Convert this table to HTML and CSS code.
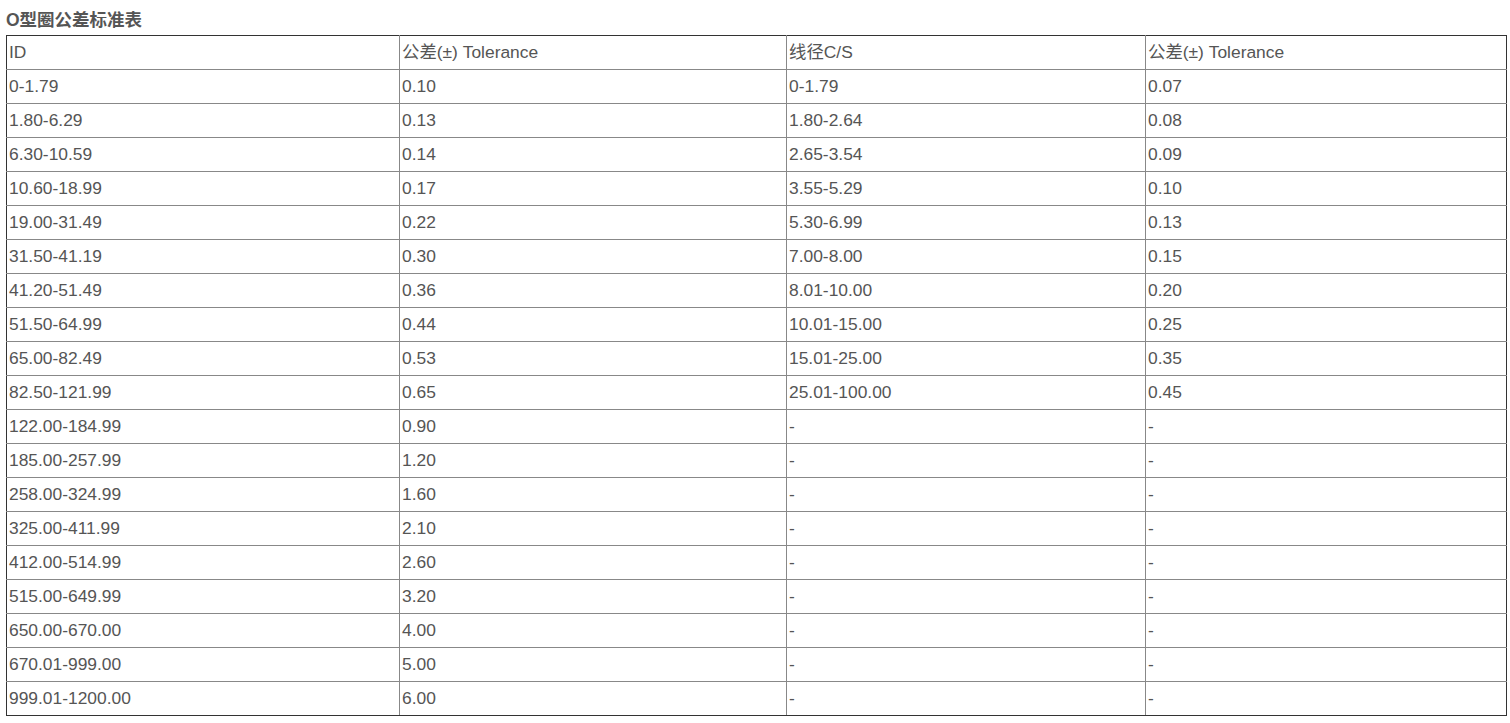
FILE: index.html
```html
<!DOCTYPE html>
<html lang="zh">
<head>
<meta charset="utf-8">
<title>O型圈公差标准表</title>
<link rel="stylesheet" href="styles.css">
</head>
<body>
<div class="page">
  <h3 class="title">O型圈公差标准表</h3>
  <table class="tol">
    <colgroup>
      <col class="c1"><col class="c2"><col class="c3"><col class="c4">
    </colgroup>
    <tbody>
      <tr><td>ID</td><td>公差(±) Tolerance</td><td>线径C/S</td><td>公差(±) Tolerance</td></tr>
      <tr><td>0-1.79</td><td>0.10</td><td>0-1.79</td><td>0.07</td></tr>
      <tr><td>1.80-6.29</td><td>0.13</td><td>1.80-2.64</td><td>0.08</td></tr>
      <tr><td>6.30-10.59</td><td>0.14</td><td>2.65-3.54</td><td>0.09</td></tr>
      <tr><td>10.60-18.99</td><td>0.17</td><td>3.55-5.29</td><td>0.10</td></tr>
      <tr><td>19.00-31.49</td><td>0.22</td><td>5.30-6.99</td><td>0.13</td></tr>
      <tr><td>31.50-41.19</td><td>0.30</td><td>7.00-8.00</td><td>0.15</td></tr>
      <tr><td>41.20-51.49</td><td>0.36</td><td>8.01-10.00</td><td>0.20</td></tr>
      <tr><td>51.50-64.99</td><td>0.44</td><td>10.01-15.00</td><td>0.25</td></tr>
      <tr><td>65.00-82.49</td><td>0.53</td><td>15.01-25.00</td><td>0.35</td></tr>
      <tr><td>82.50-121.99</td><td>0.65</td><td>25.01-100.00</td><td>0.45</td></tr>
      <tr><td>122.00-184.99</td><td>0.90</td><td>-</td><td>-</td></tr>
      <tr><td>185.00-257.99</td><td>1.20</td><td>-</td><td>-</td></tr>
      <tr><td>258.00-324.99</td><td>1.60</td><td>-</td><td>-</td></tr>
      <tr><td>325.00-411.99</td><td>2.10</td><td>-</td><td>-</td></tr>
      <tr><td>412.00-514.99</td><td>2.60</td><td>-</td><td>-</td></tr>
      <tr><td>515.00-649.99</td><td>3.20</td><td>-</td><td>-</td></tr>
      <tr><td>650.00-670.00</td><td>4.00</td><td>-</td><td>-</td></tr>
      <tr><td>670.01-999.00</td><td>5.00</td><td>-</td><td>-</td></tr>
      <tr><td>999.01-1200.00</td><td>6.00</td><td>-</td><td>-</td></tr>
    </tbody>
  </table>
</div>
</body>
</html>
```

FILE: styles.css
```css
html, body {
  margin: 0;
  padding: 0;
  background: #fff;
}

.page {
  padding: 10px 0 0 6px;
  font-family: "Liberation Sans", Arial, "Noto Sans CJK SC", sans-serif;
  color: #555;
}

.title {
  margin: 0 0 5px 0;
  font-size: 17.5px;
  line-height: 20px;
  font-weight: bold;
  color: #555;
  font-family: "Liberation Sans", Arial, "Noto Sans CJK SC", sans-serif;
}

.tol {
  width: 1500px;
  table-layout: fixed;
  border-collapse: collapse;
  border: 1px solid #333;
  font-size: 17.4px;
}

.c1 { width: 393px; }
.c2 { width: 387px; }
.c3 { width: 359px; }
.c4 { width: 361px; }

.tol td {
  height: 34px;
  padding: 0 2px 2px 2px;
  box-sizing: border-box;
  border: 1px solid #888;
  vertical-align: middle;
  line-height: 20px;
  color: #555;
  text-align: left;
}

.tol tr:first-child td { border-top-color: #333; }
.tol tr:last-child td { border-bottom-color: #333; }
.tol td:first-child { border-left-color: #333; }
.tol td:last-child { border-right-color: #333; }
```
